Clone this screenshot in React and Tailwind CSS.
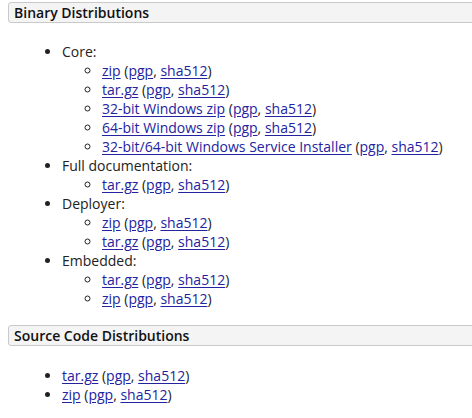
const link = 'text-[#2323a1] underline underline-offset-2'

function Files({ name }) {
  return (
    <>
      <a href="#" className={link}>{name}</a> (<a href="#" className={link}>pgp</a>, <a href="#" className={link}>sha512</a>)
    </>
  )
}

function Header({ children }) {
  return (
    <div className="-mr-4 rounded-[3px] border border-[#c9c9c9] bg-[#f4f4f4] pl-[5px] h-[21px] flex items-center text-[14px] font-semibold text-[#111]">
      {children}
    </div>
  )
}

const binary = [
  { label: 'Core:', files: ['zip', 'tar.gz', '32-bit Windows zip', '64-bit Windows zip', '32-bit/64-bit Windows Service Installer'] },
  { label: 'Full documentation:', files: ['tar.gz'] },
  { label: 'Deployer:', files: ['zip', 'tar.gz'] },
  { label: 'Embedded:', files: ['tar.gz', 'zip'] },
]

export default function App() {
  return (
    <div className="min-h-screen bg-white overflow-hidden pl-2 pt-[2px] text-[14px] leading-[19px] text-[#222]" style={{ fontFamily: '"Open Sans", sans-serif' }}>
      <Header>Binary Distributions</Header>
      <ul className="list-disc pl-[54px] mt-[19px]">
        {binary.map((group) => (
          <li key={group.label}>
            {group.label}
            <ul className="list-[circle] pl-[40px]">
              {group.files.map((f, i) => (
                <li key={i}><Files name={f} /></li>
              ))}
            </ul>
          </li>
        ))}
      </ul>

      <div className="mt-[17px]">
        <Header>Source Code Distributions</Header>
      </div>
      <ul className="list-disc pl-[54px] mt-[20px]">
        <li><Files name="tar.gz" /></li>
        <li><Files name="zip" /></li>
      </ul>
    </div>
  )
}
